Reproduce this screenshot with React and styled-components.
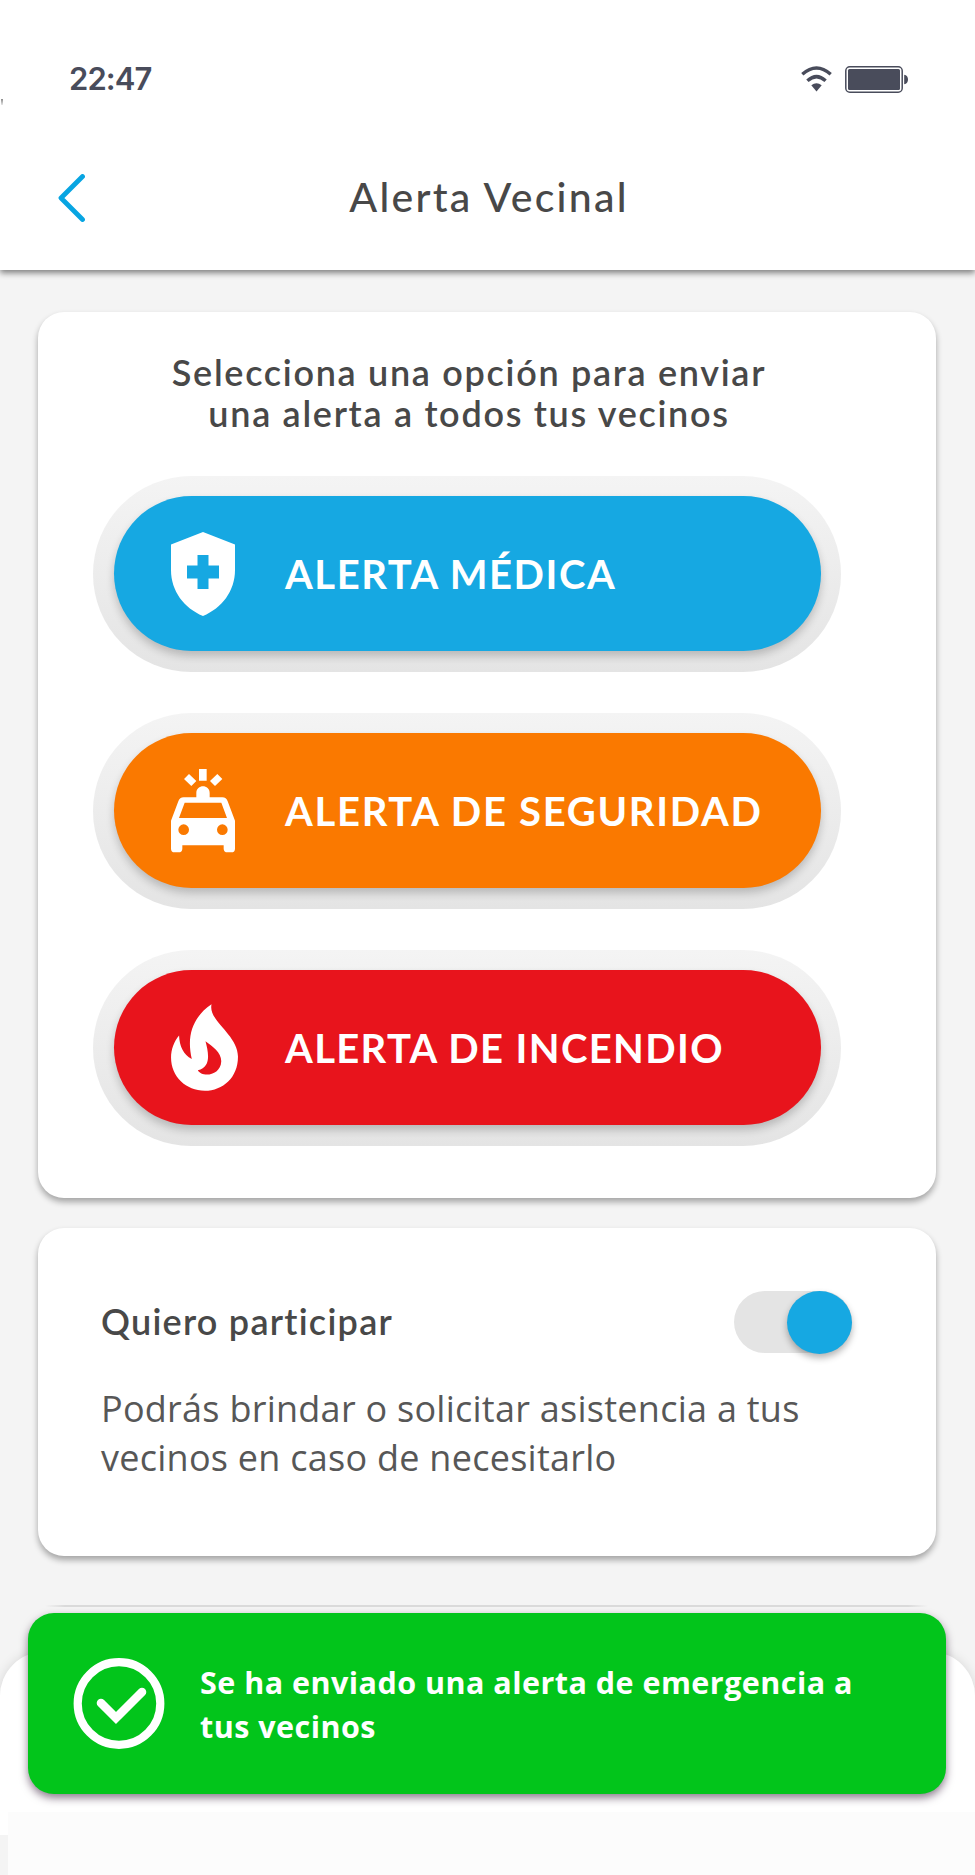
import styled, { createGlobalStyle } from "styled-components"

const GlobalStyle = createGlobalStyle`
  * {
    box-sizing: border-box;
  }

  body {
    margin: 0;
    background: #f4f4f4;
  }
`

const Screen = styled.div`
  position: relative;
  display: flex;
  flex-direction: column;
  width: 975px;
  height: 1875px;
  overflow: hidden;
  background: #f4f4f4;
  color: #484848;
  font-family: Lato, "Open Sans", sans-serif;
`

const Header = styled.header`
  height: 270px;
  background: #fff;
  box-shadow: 0 3px 6px rgba(0, 0, 0, 0.48);
`

const StatusBar = styled.div`
  position: relative;
  display: flex;
  align-items: center;
  justify-content: space-between;
  height: 158px;
  padding: 0 67px 0 69px;
  color: #494c5b;

  &::before {
    content: "";
    position: absolute;
    left: 1px;
    top: 99px;
    width: 2px;
    height: 6px;
    background: linear-gradient(#8a8a8a, #e8e8e8);
  }
`

const Clock = styled.span`
  margin-top: -2px;
  font-family: Inter, sans-serif;
  font-size: 31px;
  font-weight: 600;
  letter-spacing: -0.9px;
`

const StatusIcons = styled.div`
  display: flex;
  align-items: center;
  gap: 13px;
`

const TitleBar = styled.div`
  display: grid;
  grid-template-columns: 86px 1fr 86px;
  align-items: center;
  height: 80px;
`

const BackButton = styled.button`
  display: flex;
  justify-content: flex-end;
  padding: 0 1px 0 0;
  border: 0;
  background: none;
`

const Title = styled.h1`
  margin: -3px 0 0;
  padding-left: 3px;
  text-align: center;
  font-size: 41px;
  font-weight: 500;
  line-height: 48px;
  letter-spacing: 2.25px;
  white-space: nowrap;
`

const Content = styled.main`
  display: flex;
  flex-direction: column;
  gap: 30px;
  padding: 42px 39px 0 38px;
`

const Card = styled.section`
  height: ${(p) => p.$height}px;
  padding: ${(p) => p.$padding};
  border-radius: 26px;
  background: #fff;
  box-shadow: 0 4px 6px rgba(0, 0, 0, 0.33);
`

const Prompt = styled.h2`
  margin: 0 0 42px;
  padding-left: 4px;
  text-align: center;
  font-size: 36px;
  font-weight: 600;
  line-height: 41px;
  letter-spacing: 1.7px;
  white-space: nowrap;
`

const AlertList = styled.div`
  display: flex;
  flex-direction: column;
  gap: 41px;
`

const AlertRing = styled.div`
  height: 196px;
  padding: 20px 20px 21px 21px;
  border-radius: 98px;
  background: linear-gradient(#f4f4f4, #e4e4e4);
`

const AlertButton = styled.button`
  display: flex;
  align-items: center;
  gap: 44px;
  width: 707px;
  height: 155px;
  padding: 0 0 0 57px;
  border: 0;
  border-radius: 78px;
  background: ${(p) => p.$color};
  color: #fff;
  font-family: Lato, sans-serif;
  font-size: 40px;
  font-weight: 700;
  letter-spacing: ${(p) => p.$spacing}px;
  white-space: nowrap;
  box-shadow: 0 5px 8px rgba(0, 0, 0, 0.2);
`

const IconSlot = styled.span`
  display: flex;
  flex: none;
  width: 70px;
`

const ParticipateRow = styled.div`
  display: flex;
  align-items: center;
  justify-content: space-between;
  height: 64px;
`

const ParticipateTitle = styled.h3`
  margin: -3px 0 0;
  font-size: 36px;
  font-weight: 600;
  letter-spacing: 1.25px;
`

const Switch = styled.div`
  display: flex;
  justify-content: flex-end;
  width: 118px;
  height: 62px;
  border-radius: 31px;
  background: #e4e4e4;
`

const Knob = styled.span`
  width: 65px;
  height: 63px;
  border-radius: 50%;
  background: #16a8e2;
  box-shadow: 0 4px 7px rgba(0, 0, 0, 0.3);
`

const Description = styled.p`
  margin: 30px 0 0;
  font-family: "Open Sans", sans-serif;
  font-size: 36px;
  line-height: 49px;
  letter-spacing: 0.26px;
  color: #575757;
  white-space: nowrap;
`

const BottomSheet = styled.div`
  position: absolute;
  left: 0;
  right: 0;
  bottom: 0;
  height: 223px;
  padding: 160px 0 0 8px;
  border-radius: 44px 44px 0 0;
  background: linear-gradient(#fff 183px, #f4f4f4 183px);
  box-shadow: 0 0 12px rgba(0, 0, 0, 0.12);
`

const SheetFooter = styled.div`
  height: 63px;
  background: #fcfcfc;
`

const HiddenCardEdge = styled.div`
  position: absolute;
  top: 1605px;
  left: 45px;
  right: 47px;
  height: 2px;
  background: linear-gradient(to right, #f4f4f4, #dadada 20px, #dadada 863px, #f4f4f4);
`

const Toast = styled.div`
  position: absolute;
  top: 1613px;
  left: 28px;
  display: flex;
  width: 918px;
  height: 181px;
  padding: 45px 0 0 45px;
  gap: 35px;
  border-radius: 26px;
  background: #02c51b;
  color: #fff;
  box-shadow: 0 4px 8px rgba(45, 20, 50, 0.55);
`

const ToastText = styled.p`
  margin: 2px 0 0;
  font-family: "Open Sans", sans-serif;
  font-size: 30.5px;
  font-weight: 700;
  line-height: 44px;
  letter-spacing: 0.47px;
  white-space: nowrap;
`

function WifiIcon() {
  return (
    <svg width="31" height="26" viewBox="0 0 31 26" fill="none" stroke="currentColor" strokeWidth="3.4">
      <path d="M1.3 8.3Q15.5-4.4 29.7 8.3" />
      <path d="M6.4 14.8Q15.5 6.5 24.6 14.8" />
      <path d="M10.3 19.3Q15.5 15 20.7 19.3L15.5 25.5Z" fill="currentColor" stroke="none" />
    </svg>
  )
}

function BatteryIcon() {
  return (
    <svg width="63" height="27" viewBox="0 0 63 27">
      <rect x="0.8" y="0.8" width="56.4" height="25.4" rx="4" fill="#fff" stroke="currentColor" strokeWidth="1.5" />
      <rect x="3" y="3" width="52" height="21" rx="1.5" fill="currentColor" />
      <path d="M59.2 8.8Q63 9.5 63 13.5Q63 17.5 59.2 18.2Z" fill="currentColor" />
    </svg>
  )
}

function ShieldIcon() {
  return (
    <svg width="64" height="84" viewBox="0 0 64 84" fill="#fff">
      <path
        fillRule="evenodd"
        d="M32 0L64 12.5V38C64 59 51 76 32 84C13 76 0 59 0 38V12.5ZM26.5 23V33.5H16V46.5H26.5V57H37.5V46.5H48V33.5H37.5V23Z"
      />
    </svg>
  )
}

function PoliceCarIcon() {
  return (
    <svg width="64" height="84" viewBox="0 0 192 252" fill="#fff">
      <path d="M84 0H107V35H84ZM39 30L54 15L76 36L61 51ZM117 36L139 15L154 30L132 51Z" />
      <path
        fillRule="evenodd"
        d="M76 85V72C76 45 116 45 116 72V85H154Q166 85 170 97L192 155V239Q192 250 181 250H170Q158 250 158 239V229H34V239Q34 250 22 250H11Q0 250 0 239V155L22 97Q26 85 38 85ZM41 101L24 147H168L151 101ZM38 166A16 16 0 1 0 38 198A16 16 0 1 0 38 166ZM154 166A16 16 0 1 0 154 198A16 16 0 1 0 154 166Z"
      />
    </svg>
  )
}

function FlameIcon() {
  return (
    <svg width="67" height="87" viewBox="0 0 200 260" fill="#fff">
      <path
        fillRule="evenodd"
        d="M121 1C110 50 199 91 200 156C201 218 156 259 101 259C45 259 0 218 0 160C0 135 9 112 24 94C25 125 37 152 62 164C45 93 67 37 121 1ZM103 111C112 145 121 189 80 198C91 220 148 216 150 172C151 145 124 126 103 111Z"
      />
    </svg>
  )
}

function CheckCircleIcon() {
  return (
    <svg width="92" height="92" viewBox="0 0 92 92" fill="none" stroke="#fff">
      <circle cx="46" cy="45.5" r="41.3" strokeWidth="8.2" />
      <path d="M28 45L43 60L69 34" strokeWidth="8.6" strokeLinecap="round" />
    </svg>
  )
}

const alerts = [
  { label: "ALERTA MÉDICA", color: "#16a8e2", spacing: 1.55, Icon: ShieldIcon },
  { label: "ALERTA DE SEGURIDAD", color: "#fa7900", spacing: 1.7, Icon: PoliceCarIcon },
  { label: "ALERTA DE INCENDIO", color: "#e8141c", spacing: 1.35, Icon: FlameIcon },
]

export default function App() {
  return (
    <>
      <GlobalStyle />
      <Screen>
        <Header>
          <StatusBar>
            <Clock>22:47</Clock>
            <StatusIcons>
              <WifiIcon />
              <BatteryIcon />
            </StatusIcons>
          </StatusBar>
          <TitleBar>
            <BackButton aria-label="Volver">
              <svg width="27" height="48" viewBox="0 0 27 48" fill="none" stroke="#08a5e2" strokeWidth="4.8">
                <path d="M24.5 2.5L3 24L24.5 45.5" strokeLinecap="round" strokeLinejoin="round" />
              </svg>
            </BackButton>
            <Title>Alerta Vecinal</Title>
          </TitleBar>
        </Header>

        <Content>
          <Card $height={886} $padding="40px 95px 0 55px">
            <Prompt>
              Selecciona una opción para enviar
              <br />
              una alerta a todos tus vecinos
            </Prompt>
            <AlertList>
              {alerts.map(({ label, color, spacing, Icon }) => (
                <AlertRing key={label}>
                  <AlertButton $color={color} $spacing={spacing}>
                    <IconSlot>
                      <Icon />
                    </IconSlot>
                    {label}
                  </AlertButton>
                </AlertRing>
              ))}
            </AlertList>
          </Card>

          <Card $height={328} $padding="62px 84px 0 63px">
            <ParticipateRow>
              <ParticipateTitle>Quiero participar</ParticipateTitle>
              <Switch role="switch" aria-checked="true">
                <Knob />
              </Switch>
            </ParticipateRow>
            <Description>
              Podrás brindar o solicitar asistencia a tus
              <br />
              vecinos en caso de necesitarlo
            </Description>
          </Card>
        </Content>

        <HiddenCardEdge />
        <BottomSheet>
          <SheetFooter />
        </BottomSheet>
        <Toast role="status">
          <CheckCircleIcon />
          <ToastText>
            Se ha enviado una alerta de emergencia a
            <br />
            tus vecinos
          </ToastText>
        </Toast>
      </Screen>
    </>
  )
}
